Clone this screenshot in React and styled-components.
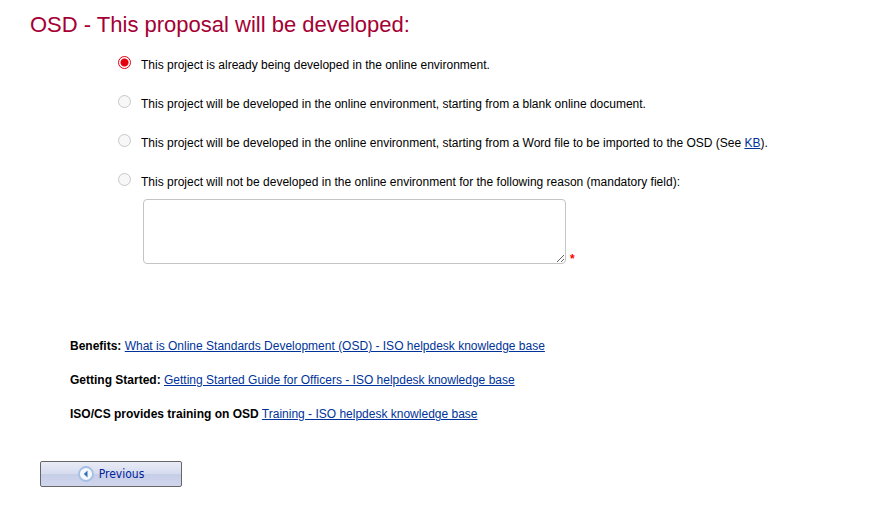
import React, {useState} from 'react';
import styled, {createGlobalStyle} from 'styled-components';

const GlobalStyle = createGlobalStyle`
    body {
        margin: 0;
        background-color: #fff;
        color: #000;
        font-family: "Liberation Sans", Arial, sans-serif;
        font-size: 12px;
        line-height: 14px;
    }
`;
const Page = styled.main`
    display: flex;
    flex-direction: column;
    padding: 11px 30px 20px;
`;
const Title = styled.h1`
    margin: 0;
    font-size: 22px;
    line-height: 28px;
    font-weight: normal;
    color: #a50034;
`;
const Options = styled.div`
    display: flex;
    flex-direction: column;
    gap: 23px;
    padding: 17px 0 0 88px;
`;
const Option = styled.div`
    display: flex;
    align-items: flex-start;
    gap: 10px;
`;
const Radio = styled.input`
    appearance: none;
    flex: none;
    box-sizing: border-box;
    width: 13px;
    height: 13px;
    margin: 0;
    border: 1px solid ${props => (props.checked ? '#e3000f' : '#c8c8c8')};
    border-radius: 50%;
    background: ${props => (props.checked ? 'radial-gradient(circle, #e3000f 45%, #fff 58%)' : '#f7f7f7')};
`;
const OptionText = styled.label`
    padding-top: 2px;
`;
const Link = styled.a`
    color: #003399;
    text-decoration: underline;
`;
const ReasonRow = styled.div`
    display: flex;
    align-items: flex-end;
    gap: 4px;
    padding: 10px 0 0 113px;
`;
const Reason = styled.textarea`
    box-sizing: border-box;
    width: 423px;
    height: 65px;
    margin: 0;
    border: 1px solid #c4c4c4;
    border-radius: 4px;
    font: inherit;
`;
const Required = styled.span`
    color: #ff0000;
    font-weight: bold;
    line-height: 10px;
`;
const Resources = styled.div`
    display: flex;
    flex-direction: column;
    gap: 20px;
    padding: 75px 0 0 40px;
`;
const Resource = styled.p`
    margin: 0;
`;
const Actions = styled.div`
    padding: 40px 0 0 10px;
`;
const NavButton = styled.button`
    display: flex;
    align-items: center;
    justify-content: center;
    gap: 5px;
    width: 142px;
    height: 26px;
    padding: 0;
    border: 1px solid #666;
    border-radius: 2px;
    background: linear-gradient(#e9ecf7 0%, #d5dbee 50%, #c6cde7 50%, #cfd6ec 100%);
    color: #002299;
    font-family: Tahoma, "DejaVu Sans Condensed", sans-serif;
    font-size: 12px;
    line-height: 14px;
    cursor: pointer;
`;

const KbLink = () => <Link href="#kb">KB</Link>;

const OPTIONS = [
    {id: 'already', text: 'This project is already being developed in the online environment.'},
    {id: 'blank', text: 'This project will be developed in the online environment, starting from a blank online document.'},
    {id: 'word', text: <>This project will be developed in the online environment, starting from a Word file to be imported to the OSD (See <KbLink />).</>},
    {id: 'offline', text: 'This project will not be developed in the online environment for the following reason (mandatory field):'},
];

const RESOURCES = [
    {label: 'Benefits:', link: 'What is Online Standards Development (OSD) - ISO helpdesk knowledge base', href: '#benefits'},
    {label: 'Getting Started:', link: 'Getting Started Guide for Officers - ISO helpdesk knowledge base', href: '#getting-started'},
    {label: 'ISO/CS provides training on OSD', link: 'Training - ISO helpdesk knowledge base', href: '#training'},
];

const PreviousIcon = () => (
    <svg width="16" height="16" viewBox="0 0 16 16" aria-hidden="true">
        <circle cx="8" cy="8" r="7" fill="#f4f8fd" stroke="#a3bfe4" strokeWidth="1.8" />
        <path d="M9.5 4.5v7L5.8 8z" fill="#2f6fba" />
    </svg>
);

export default function App() {
    const [selected, setSelected] = useState('already');
    const [reason, setReason] = useState('');

    return (
        <>
            <GlobalStyle />
            <Page>
                <Title>OSD - This proposal will be developed:</Title>
                <Options role="radiogroup">
                    {OPTIONS.map(({id, text}) => (
                        <Option key={id}>
                            <Radio type="radio" name="development" id={id} checked={selected === id} onChange={() => setSelected(id)} />
                            <OptionText htmlFor={id}>{text}</OptionText>
                        </Option>
                    ))}
                </Options>
                <ReasonRow>
                    <Reason aria-label="Reason" value={reason} onChange={event => setReason(event.target.value)} />
                    <Required>*</Required>
                </ReasonRow>
                <Resources>
                    {RESOURCES.map(({label, link, href}) => (
                        <Resource key={href}><b>{label}</b> <Link href={href}>{link}</Link></Resource>
                    ))}
                </Resources>
                <Actions>
                    <NavButton type="button"><PreviousIcon />Previous</NavButton>
                </Actions>
            </Page>
        </>
    );
}
